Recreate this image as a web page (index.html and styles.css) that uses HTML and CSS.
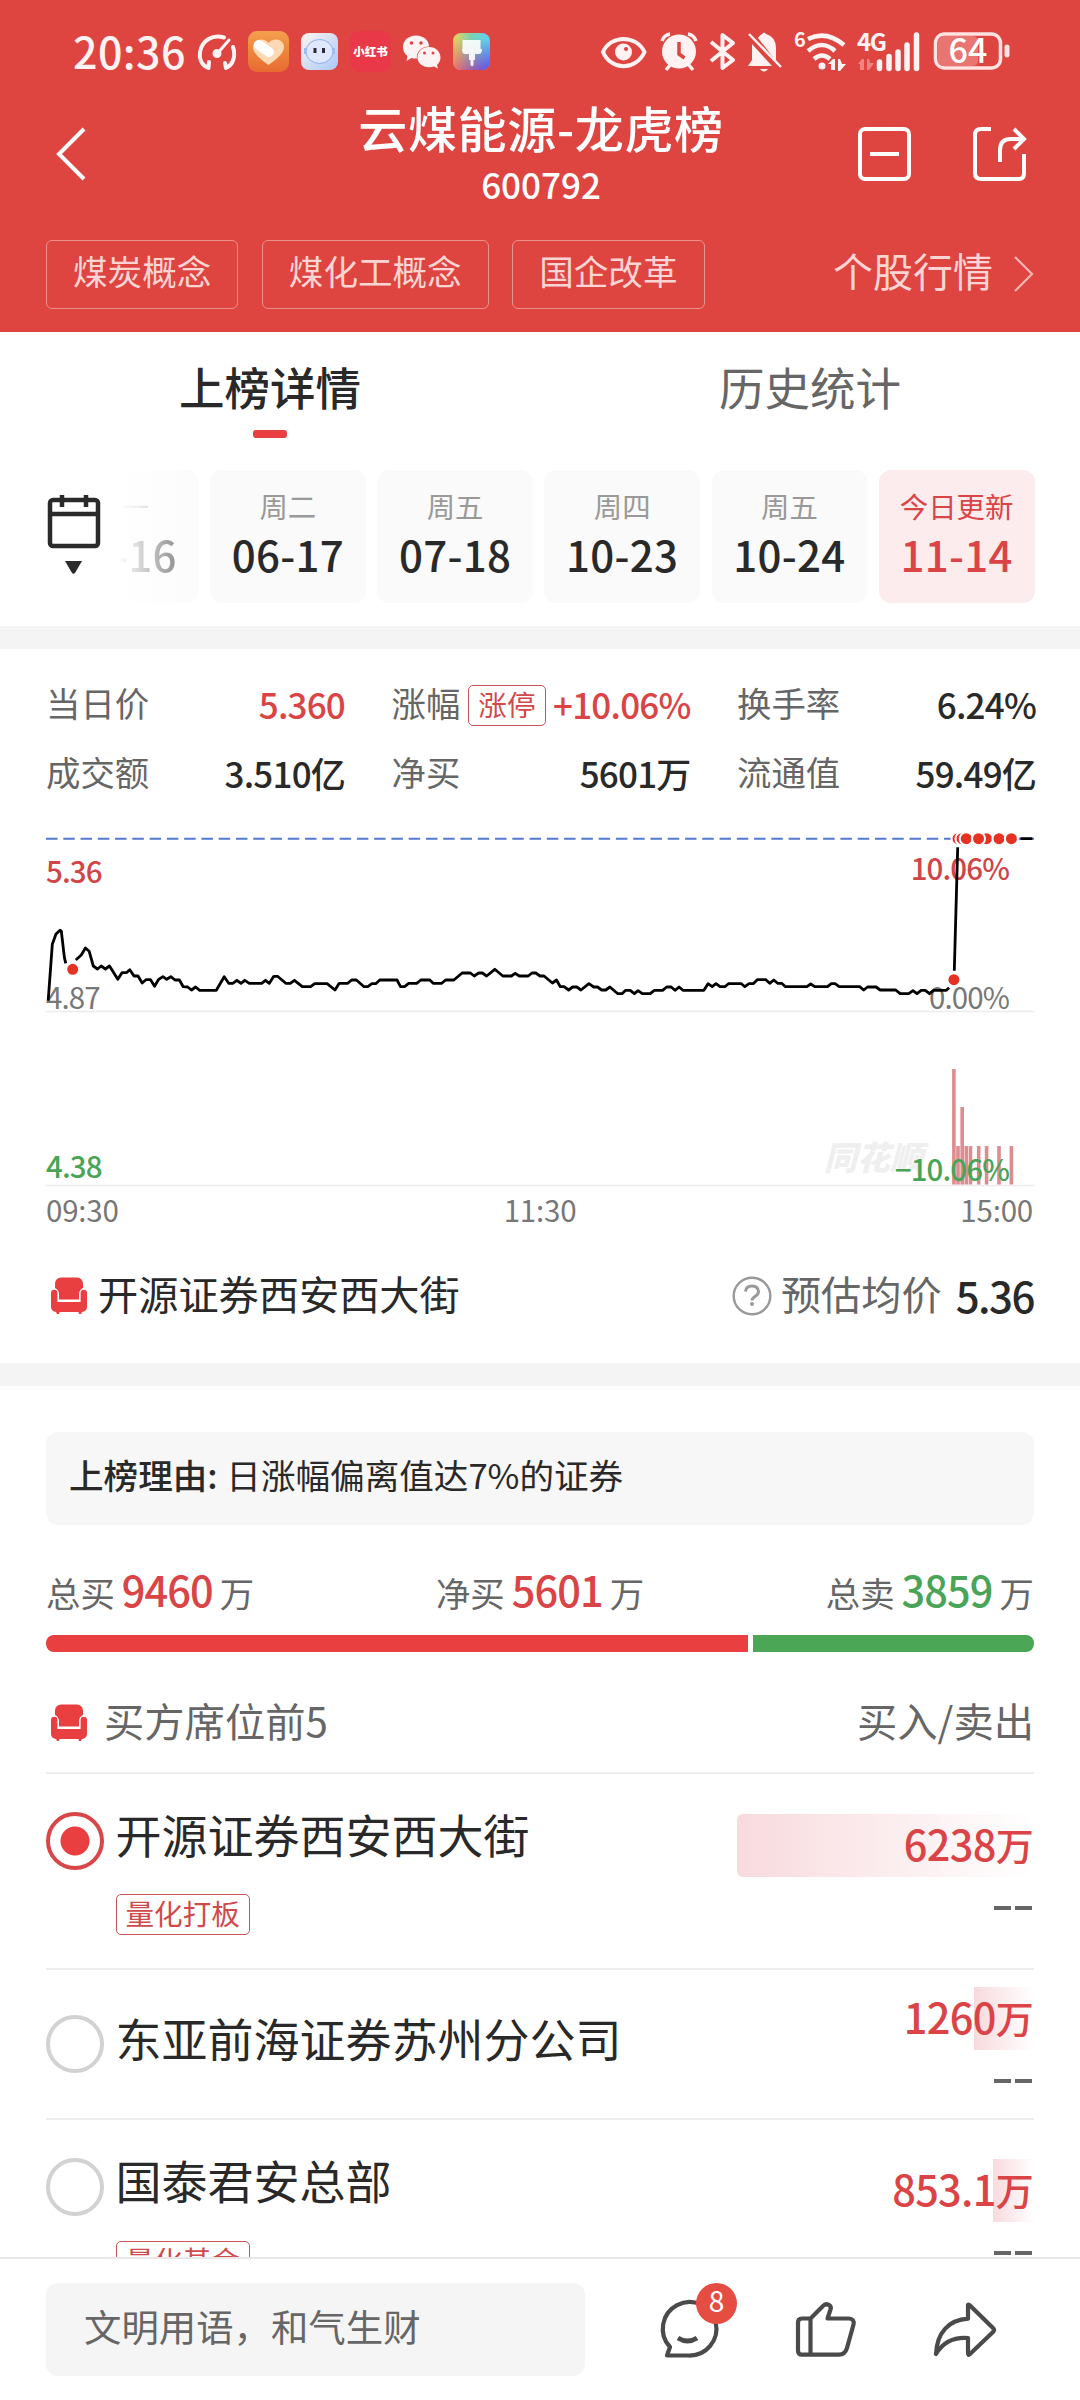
FILE: index.html
```html
<!DOCTYPE html>
<html lang="zh-CN">
  <head>
    <meta charset="UTF-8" />
    <meta name="viewport" content="width=device-width, initial-scale=1.0" />
    <title>云煤能源-龙虎榜</title>
    <link rel="stylesheet" href="styles.css">
  </head>
  <body>
    <svg width="0" height="0" class="defs">
      <symbol id="sofa" viewBox="0 0 36 38">
        <path fill="#e93f41" d="M10 0.500h16a6 6 0 0 1 6 6v4.500a7 7 0 0 0-4 6v5.500H8V17a7 7 0 0 0-4-6V6.500a6 6 0 0 1 6-6z" />
        <path fill="#e93f41" d="M0 16a3.200 3.200 0 0 1 6.400 0v9h23.200v-9a3.200 3.200 0 0 1 6.400 0v14a5 5 0 0 1-5 5l-1 2h-2l-.5-2h-19l-.5 2H6l-1-2a5 5 0 0 1-5-5z" />
      </symbol>
    </svg>

    <header class="header">
      <div class="status">
        <span class="clock">20:36</span>
        <div class="status-group">
          <svg width="40" height="42" viewBox="0 0 40 42" fill="none" stroke="#fff2f2" stroke-width="4" stroke-linecap="round">
            <path d="M11.500 38C4 35 2 28 3 22 5 10 16 4 27 7.500M36 17c3 9 0 18-7 21M12 32l-.5 6M28 33l1 5" />
            <path d="M20 24L32 10" stroke-width="3" /><circle cx="20" cy="23.500" r="2.500" fill="#fff2f2" />
          </svg>
          <svg width="41" height="42" viewBox="0 0 41 42">
            <defs><linearGradient id="orange" x2="0" y2="1"><stop stop-color="#f4a04c" /><stop offset="1" stop-color="#e86a30" /></linearGradient></defs>
            <rect y="1" width="41" height="41" rx="9" fill="url(#orange)" />
            <path fill="#fbd9b4" d="M20.500 35C12 29 5 23 5 17c0-8 11-10 15.500-4C25 7 36 9 36 17c0 6-7 12-15.500 18z" />
            <path d="M11 15l10 7" stroke="#fff" stroke-width="10" stroke-linecap="round" />
          </svg>
          <svg width="39" height="42" viewBox="0 0 39 42">
            <defs><linearGradient id="robot" x2="1" y2="1"><stop stop-color="#fff5ee" /><stop offset="1" stop-color="#a9c8f8" /></linearGradient></defs>
            <rect x="1" y="3" width="37" height="37" rx="8" fill="url(#robot)" />
            <ellipse cx="19.500" cy="21.500" rx="13.500" ry="12" fill="#dfe8fd" stroke="#8fb0ee" />
            <path d="M5 18v6M34 18v6" stroke="#9dbcf2" stroke-width="2" />
            <path d="M15 18v5M23.500 18v5" stroke="#2b2a3a" stroke-width="3" />
          </svg>
          <span class="app-red">小红书</span>
          <svg width="39" height="42" viewBox="0 0 39 42">
            <path fill="#fff2f2" d="M14 5.500c8 0 13 5 13 11-8 0-13 6-12 12-2 .3-4 0-5.500-.5L4.500 31l1-5C2 23.500 1 20 1 17 1 10.500 6.500 5.500 14 5.500z" />
            <path fill="#fff2f2" d="M27 17c7 0 11.500 5 11.500 10.500 0 3-1.500 5.500-3.500 7.500l1 3.500-4-2c-9 2.500-16.500-2-16.500-9C15.500 21.500 20 17 27 17z" />
            <g fill="#de4440"><circle cx="9.500" cy="13" r="1.800" /><circle cx="19" cy="13" r="1.800" /><circle cx="22.500" cy="23" r="1.500" /><circle cx="31" cy="23" r="1.500" /></g>
          </svg>
          <svg width="39" height="42" viewBox="0 0 39 42">
            <defs>
              <linearGradient id="paintTop" x2="1"><stop stop-color="#f3d255" /><stop offset=".5" stop-color="#79d0b5" /><stop offset="1" stop-color="#5fd0f6" /></linearGradient>
              <linearGradient id="paintLow" x2="1"><stop stop-color="#ef6a68" /><stop offset="1" stop-color="#5646ee" /></linearGradient>
              <linearGradient id="paintFade" x2="0" y2="1"><stop offset=".2" stop-color="#fff" stop-opacity="0" /><stop offset="1" stop-color="#fff" /></linearGradient>
              <mask id="paintMask"><rect width="39" height="42" fill="url(#paintFade)" /></mask>
            </defs>
            <rect x="1" y="3" width="37" height="37" rx="8" fill="url(#paintTop)" />
            <rect x="1" y="3" width="37" height="37" rx="8" fill="url(#paintLow)" mask="url(#paintMask)" />
            <path fill="#fff" opacity=".9" d="M10.500 10h18v9h1.500q0 5-3 5h-4v6h-1.500v5q-1.500 2.500-3 0v-5H17v-6h-4q-3 0-3-5h.5z" />
          </svg>
        </div>
        <div class="status-group status-right">
          <svg width="46" height="42" viewBox="0 0 46 42">
            <path d="M2 22C10 4.500 35 4.500 43.500 22 35 41 10 41 2 22z" fill="none" stroke="#fff2f2" stroke-width="4" />
            <circle cx="22.500" cy="22" r="8.500" fill="#fff2f2" /><circle cx="25" cy="19" r="2" fill="#de4440" />
          </svg>
          <svg width="39" height="42" viewBox="0 0 39 42">
            <path d="M7 40l5-6M34 40l-5-6M3 11q2-6 8-7M37 11q-2-6-8-7" stroke="#fff2f2" stroke-width="3.500" fill="none" />
            <circle cx="20" cy="21.500" r="17" fill="#fff2f2" /><path d="M20 12v12l5.500 4" fill="none" stroke="#de4440" stroke-width="3.500" />
          </svg>
          <svg width="25" height="42" viewBox="0 0 25 42">
            <path d="M1 12l22 18-10.500 8V5L23 13 1 31" fill="none" stroke="#fff2f2" stroke-width="4" stroke-linejoin="round" />
          </svg>
          <svg width="35" height="42" viewBox="0 0 35 42">
            <path fill="#fff2f2" d="M15 4q2-3 4 0 10 3 10 14v13L11 8q2-3 4-4zM5 14l20 22H1l4-6zM13 39h8q-4 5-8 0z" />
            <path d="M2 4l32 33" stroke="#fff2f2" stroke-width="2.500" />
          </svg>
          <svg width="52" height="42" viewBox="0 0 52 42">
            <text x="0" y="17" class="status-tiny">6</text>
            <path d="M14 9q18-9 36 6M14 21q14-12 27 0M20 29q8-7 16 0" fill="none" stroke="#fff2f2" stroke-width="4.500" />
            <circle cx="28" cy="36" r="3.500" fill="#fff2f2" />
            <path fill="#fff2f2" d="M34 34l5-5h2v11h-4v-6zM44 29h2l2 5h4l-6 7h-2z" />
          </svg>
          <svg width="64" height="42" viewBox="0 0 64 42">
            <text x="-1" y="21" class="status-tiny status-net">4G</text>
            <path fill="#ef8583" d="M0 34l4-5h2v11H2v-6zM9 29h2l1 4h4l-5 7H9z" />
            <path d="M21.500 32v6.500M31 26.500v12M40 22v16.500M49 15v23.500M58.500 5v33.500" stroke="#fff2f2" stroke-width="5.500" stroke-linecap="round" />
          </svg>
          <svg width="77" height="42" viewBox="0 0 77 42">
            <rect x="1.500" y="4" width="65" height="34" rx="9" fill="none" stroke="#ffe3e2" stroke-width="3.500" />
            <rect x="4" y="6" width="40" height="30" rx="5" fill="#e97572" />
            <path d="M73 17v8" stroke="#ffe3e2" stroke-width="5" stroke-linecap="round" />
            <text x="14.500" y="33" class="status-level">64</text>
          </svg>
        </div>
      </div>

      <div class="navbar">
        <svg class="back" width="30" height="56" viewBox="0 0 30 56" fill="none" stroke="#fff" stroke-width="4"><path d="M28 3L3 28l25 25" /></svg>
        <div class="title">
          <h1>云煤能源-龙虎榜</h1>
          <p>600792</p>
        </div>
        <div class="nav-actions">
          <svg width="54" height="54" viewBox="0 0 54 54" fill="none" stroke="#fff" stroke-width="4"><rect x="2" y="2" width="49" height="50" rx="5" /><path d="M12 27h29" /></svg>
          <svg width="54" height="54" viewBox="0 0 54 54" fill="none" stroke="#fff" stroke-width="4"><path d="M18 2H8q-6 0-6 6v38q0 6 6 6h38q5 0 5-6V27" /><path d="M27 35V23q0-11 11-11h13M41 2l10 10-10 10" /></svg>
        </div>
      </div>

      <div class="concepts">
        <span class="concept">煤炭概念</span>
        <span class="concept">煤化工概念</span>
        <span class="concept">国企改革</span>
        <span class="quote-link"><span>个股行情</span>
          <svg width="20" height="36" viewBox="0 0 20 36" fill="none" stroke="#f6b7b5" stroke-width="2.200"><path d="M1 1l17 17L1 35" /></svg>
        </span>
      </div>
    </header>

    <section class="tabs">
      <div class="tab active">上榜详情</div>
      <div class="tab">历史统计</div>
    </section>

    <section class="dates">
      <div class="calendar">
        <svg width="54" height="80" viewBox="0 0 54 80" fill="none" stroke="#2a2a2a" stroke-width="4.500">
          <rect x="3" y="5" width="48" height="46" rx="3" /><path d="M3 19h48M15 0v12M39 0v12" />
          <path d="M18 66h17l-7 12q-1.500 1.500-3 0z" fill="#2a2a2a" stroke="none" />
        </svg>
      </div>
      <div class="date faded"><small>周一</small><b>06-16</b></div>
      <div class="date"><small>周二</small><b>06-17</b></div>
      <div class="date"><small>周五</small><b>07-18</b></div>
      <div class="date"><small>周四</small><b>10-23</b></div>
      <div class="date"><small>周五</small><b>10-24</b></div>
      <div class="date today"><small>今日更新</small><b>11-14</b></div>
    </section>

    <section class="panel quote">
      <div class="stats">
        <div class="stat"><span>当日价</span><b class="red">5.360</b></div>
        <div class="stat"><span>涨幅</span><em class="tag">涨停</em><b class="red">+10.06%</b></div>
        <div class="stat"><span>换手率</span><b>6.24%</b></div>
        <div class="stat"><span>成交额</span><b>3.510亿</b></div>
        <div class="stat"><span>净买</span><b>5601万</b></div>
        <div class="stat"><span>流通值</span><b>59.49亿</b></div>
      </div>

      <svg class="chart" width="990" height="400" viewBox="0 0 990 400">
        <path d="M0 181.500H988M0 355.500H988" stroke="#ececec" stroke-width="1.500" />
        <path d="M0 8.700H988" stroke="#5679d0" stroke-width="2" stroke-dasharray="11.500 5.770" />
        <text x="778" y="340" class="watermark">同花顺</text>
        <g class="axis">
          <text x="0" y="53" class="up">5.36</text>
          <text x="0" y="179">4.87</text>
          <text x="0" y="348" class="down">4.38</text>
          <text x="963" y="50" class="up end">10.06%</text>
          <text x="963" y="179" class="end">0.00%</text>
        </g>
        <path stroke="#dd8d90" stroke-width="3.600" d="M907.900 239V354.500M912 316V354.500M916.200 277V354.500M920.300 316V354.500M924.500 316V354.500M932.700 316V354.500M940.600 316V354.500M953 316V354.500M965.400 316V354.500" />
        <g class="axis">
          <text x="963" y="351" class="down end">−10.06%</text>
          <text x="0" y="391.500" class="time">09:30</text>
          <text x="494" y="391.500" class="time middle">11:30</text>
          <text x="987" y="391.500" class="time end">15:00</text>
        </g>
        <g fill="none" stroke="#000" stroke-width="2.800" stroke-linejoin="round">
          <path d="M2.200 170.700L6.300 114.300 10 104 14 100.300 15.300 101 18.400 127.700 19.800 133.300" />
          <path d="M29.800 130L35.300 125 39.400 118 43.200 121.300 47.300 136 51.500 139 55.200 136 59.400 139 63.500 136 71.800 149.300 76 142.700 80.400 142.700 83.800 139.700 88 146 92 146 96.200 153 100 149.700 104.500 149.700 108.600 156.300 112.400 149.700 116.900 146.700 120.700 149.300 124.800 146.700 129 150 133.400 150 137.200 156.700 141.700 157 145.500 160 149.600 157 153.700 160.300 170.300 160.300 178.200 146.700 182.700 153.300 186.800 153.300 190.900 150.300 195 153.300 198.800 150.300 203.300 153.300 215.700 153.300 219.500 150.300 223.300 153.300 227.800 146.300 231.500 146.300 239.800 153.300 244.300 153.300 248.400 150.300 256.300 156.700 264.600 156.700 268.700 153.700 281.100 153.700 289 160 293.200 153.300 301.800 153.300 305.600 150 310.400 150 318 156.700 321.800 156.700 325.900 153.700 329.700 153.700 333.800 150 351 150 354.500 156.700 358.600 156.700 362.700 153.300 370.700 153.300 374.800 150 383.800 150 387.200 153.300 395.800 153.300 399.600 150 407.900 150 416.100 143 424.400 143 428.200 146 432.700 143 436.400 143 440.600 146 448.800 139.300 456.800 146 465.400 146 469.200 143.300 473.300 146 482.200 146 486 143 489.800 143 494 146 498 146 506.400 153 510.500 150 514.300 156.700 518 156.700 522.600 160 526.700 157 530.800 157 535 160 542.900 153.700 547.700 157 551.500 157 555.600 160 559.800 160 563.900 157 571.800 163.700 576 163.700 579.700 160.300 584.200 160.300 588.400 163.700 592.100 160.700 596.300 163.700 604.200 163.700 608.300 160.300 616.600 160.300 620.700 157 625.200 157 629 160.300 633.100 157 636.900 160.300 657.900 160.300 662 153.700 666.200 156.700 670 153.700 674.100 156.700 678.900 156.700 682.400 153.700 695.400 153.700 698.900 156.700 703 153.700 707.200 153.700 711.300 149.700 719.900 149.700 723.700 153.300 727.800 150 731.600 153.300 735.700 153.300 739.500 156.700 760.900 156.700 764.700 154 768.800 156.700 781.500 156.700 785.300 153.700 789.100 153.700 793.200 156.700 813.600 156.700 817.700 160 821.500 157 830.100 157 834.200 160 849.700 160 854.200 163.700 862.800 163.700 866.900 160.700 871 163.700 875.200 160.300 879.300 160.300 883.500 163.700 887.600 160.300 900.300 160.300 903.100 157.700" />
          <path d="M908.300 140.700L911.700 17.300M974.400 8.700H986.400" />
        </g>
        <g fill="#e63223" stroke="#fff" stroke-width="2">
          <circle cx="26.700" cy="139.300" r="6.500" /><circle cx="907.900" cy="149.700" r="6.500" />
          <circle cx="912" cy="8.700" r="6.500" /><circle cx="916" cy="8.700" r="6.500" /><circle cx="920.300" cy="8.700" r="6.500" />
          <circle cx="940.500" cy="8.700" r="6.500" /><circle cx="932.500" cy="8.700" r="6.500" />
          <circle cx="953" cy="8.700" r="6.500" /><circle cx="965.400" cy="8.700" r="6.500" />
        </g>
      </svg>

      <div class="seat-row">
        <svg class="sofa" width="36" height="38"><use href="#sofa" /></svg>
        <span class="seat-name">开源证券西安西大街</span>
        <svg width="40" height="40" viewBox="0 0 40 40" fill="none" stroke="#999" stroke-width="2.400"><circle cx="20" cy="20" r="18.300" /><path d="M13.500 15.500q.5-5.500 6.500-5.500t6.500 5.500q0 3-3.500 5-3 2-3 4" stroke-width="3" /><circle cx="20" cy="28" r="2" fill="#999" stroke="none" /></svg>
        <span class="avg-label">预估均价</span>
        <b>5.36</b>
      </div>
    </section>

    <main class="panel board">
      <p class="reason"><b>上榜理由:</b> 日涨幅偏离值达7%的证券</p>
      <div class="totals">
        <div>总买<b class="red">9460</b>万</div>
        <div>净买<b class="red">5601</b>万</div>
        <div>总卖<b class="green">3859</b>万</div>
      </div>
      <div class="ratio"><i style="flex-grow: 9460"></i><i class="sell" style="flex-grow: 3790"></i></div>
      <div class="board-head">
        <svg class="sofa" width="36" height="38"><use href="#sofa" /></svg>
        <span>买方席位前5</span>
        <span class="right">买入/卖出</span>
      </div>

      <div class="seat first">
        <i class="radio checked"></i>
        <div class="seat-info"><h2>开源证券西安西大街</h2><em class="tag">量化打板</em></div>
        <div class="seat-amount"><div class="amount" style="--bar: 297px">6238<span>万</span></div><div class="none"><i></i><i></i></div></div>
      </div>
      <div class="seat second">
        <i class="radio"></i>
        <div class="seat-info"><h2>东亚前海证券苏州分公司</h2></div>
        <div class="seat-amount"><div class="amount" style="--bar: 60px">1260<span>万</span></div><div class="none"><i></i><i></i></div></div>
      </div>
      <div class="seat third">
        <i class="radio"></i>
        <div class="seat-info"><h2>国泰君安总部</h2><em class="tag">量化基金</em></div>
        <div class="seat-amount"><div class="amount" style="--bar: 41px">853.1<span>万</span></div><div class="none"><i></i><i></i></div></div>
      </div>
    </main>

    <footer class="footer">
      <div class="comment">文明用语，和气生财</div>
      <div class="actions">
        <div class="action">
          <svg width="60" height="60" viewBox="0 0 60 60"><path d="M8 55.500L11 47A26.800 26.800 0 1 1 29.500 55.500z" /><path d="M19 38q9.500 6 19 0" stroke-width="5" /></svg>
          <span class="badge">8</span>
        </div>
        <svg width="60" height="56" viewBox="0 0 60 56"><path d="M6 16.500h8.500L27 4c3-3.500 9-1 7.500 3.500L31.500 16.500H53c3.500 0 5.500 2.500 4.500 6L51 46c-1.500 5-4.500 6.700-8 6.700H6q-4 0-4-4v-28q0-4.200 4-4.200zM14.500 16.500v36" /></svg>
        <svg width="64" height="56" viewBox="0 0 64 56"><path d="M3 52C4 30 16 18 35 16.700V3.500q0-2 2 0L60 26q2 2 0 4L37 52q-2 2-2-1V36C20 35 10 40 3 52z" /></svg>
      </div>
    </footer>
  </body>
</html>
```
FILE: styles.css
```css
* {
  box-sizing: border-box;
  margin: 0;
  padding: 0;
}
body {
  width: 1080px;
  height: 2400px;
  display: flex;
  flex-direction: column;
  overflow: hidden;
  background: #fff;
  color: #292929;
  font-family: "Noto Sans CJK SC", "Noto Sans", sans-serif;
  font-size: 34.4px;
  line-height: 1;
  white-space: nowrap;
}
svg {
  display: block;
  flex: none;
  overflow: visible;
}
.defs {
  position: absolute;
}
b {
  font-weight: 500;
}
i,
em {
  font-style: normal;
}
.red {
  color: #da4446;
}
.green {
  color: #4aa458;
}

/* header */
.header {
  flex: none;
  height: 332px;
  background: #de4440;
  color: #fff;
}
.status {
  display: flex;
  align-items: center;
  height: 102px;
  padding: 0 69px 0 73px;
}
.clock {
  width: 124px;
  margin-top: -2px;
  font-size: 43px;
  font-weight: 500;
  letter-spacing: 0.4px;
  color: #fff2f2;
}
.status-group {
  display: flex;
  gap: 11px;
}
.status-right {
  gap: 12px;
  margin-left: auto;
}
.app-red {
  width: 41px;
  height: 41px;
  margin-top: 1px;
  border-radius: 9px;
  background: #e93948;
  font-size: 11.5px;
  font-weight: 900;
  line-height: 40px;
  text-align: center;
}
.status-tiny {
  font-size: 20px;
  font-weight: 700;
  fill: #fff2f2;
}
.status-net {
  font-size: 24px;
  letter-spacing: -1.5px;
}
.status-level {
  font-size: 34px;
  font-weight: 500;
  fill: #fff;
}
.navbar {
  display: flex;
  justify-content: space-between;
  height: 138px;
  padding: 0 53px 0 56px;
}
.back {
  margin-top: 24px;
}
.title {
  text-align: center;
  margin-left: 138px;
}
.title h1 {
  font-size: 49px;
  font-weight: 500;
  line-height: 50px;
  letter-spacing: 0.6px;
}
.title p {
  font-size: 35px;
  font-weight: 500;
  line-height: 36px;
  margin-top: 14px;
}
.nav-actions {
  display: flex;
  gap: 61px;
  padding-top: 25px;
}
.concepts {
  display: flex;
  gap: 23.5px;
  padding: 0 46px;
}
.concept {
  height: 69px;
  padding: 0 26px;
  border: 1px solid #ed908d;
  border-radius: 6px;
  color: #fbd4d3;
  font-size: 34.6px;
  line-height: 59px;
}
.quote-link {
  display: flex;
  gap: 21px;
  align-items: center;
  height: 67px;
  margin-left: auto;
  font-size: 40px;
  color: #fbd4d3;
}
.quote-link span {
  margin-top: -7px;
}

/* tabs and dates */
.tabs {
  flex: none;
  display: flex;
  height: 138px;
}
.tab {
  flex: 1;
  display: flex;
  flex-direction: column;
  align-items: center;
  font-size: 45.5px;
  line-height: 60px;
  padding-top: 24px;
  color: #666;
}
.tab.active {
  color: #292929;
  font-weight: 500;
}
.tab.active::after {
  content: "";
  width: 34px;
  height: 8px;
  margin-top: 14px;
  border-radius: 3px;
  background: #e93f41;
}
.dates {
  flex: none;
  display: flex;
  justify-content: flex-end;
  gap: 11.4px;
  height: 156px;
  padding-right: 45.5px;
}
.calendar {
  flex: none;
  width: 80px;
  height: 132px;
  margin-right: -85px;
  padding: 25px 0 0 11px;
  background: #fff;
  z-index: 1;
}
.date {
  flex: none;
  display: flex;
  flex-direction: column;
  align-items: center;
  width: 155.800px;
  height: 133px;
  padding-top: 21px;
  border-radius: 12px;
  background: #fafafa;
}
.date small {
  font-size: 28.4px;
  line-height: 30px;
  color: #999;
}
.date b {
  font-size: 42px;
  line-height: 44px;
  margin-top: 11px;
  letter-spacing: 0.3px;
}
.date.faded {
  -webkit-mask-image: linear-gradient(90deg, transparent 48%, rgba(0, 0, 0, 0.7) 100%);
  mask-image: linear-gradient(90deg, transparent 48%, rgba(0, 0, 0, 0.7) 100%);
}
.date.today {
  background: #fceced;
}
.date.today small,
.date.today b {
  color: #da4446;
}

/* quote */
.panel {
  border-top: 23px solid #f4f4f4;
  padding: 0 46px;
}
.quote {
  flex: none;
  height: 737px;
}
.stats {
  display: grid;
  grid-template-columns: repeat(3, 299px);
  column-gap: 46.5px;
  padding-top: 20px;
  height: 181px;
  grid-auto-rows: 69px;
}
.stat {
  display: flex;
  align-items: center;
  color: #666;
}
.stat > span {
  margin-top: -2px;
}
.stat b {
  margin-left: auto;
  font-size: 35px;
  letter-spacing: -0.8px;
  color: #292929;
}
.stat b.red {
  color: #da4446;
}
.stat .tag {
  margin-left: 8px;
  margin-top: 3px;
}
.tag {
  display: inline-block;
  height: 41px;
  padding: 0 9px;
  border: 1.5px solid #c95557;
  border-radius: 5px;
  color: #d04a4c;
  font-size: 28.6px;
  line-height: 35px;
}
.axis text {
  font-size: 29.5px;
  letter-spacing: -0.9px;
  fill: #777;
}
.axis .up {
  fill: #d04548;
  font-weight: 500;
}
.axis .down {
  fill: #4aa458;
  font-weight: 500;
}
.axis .time {
  letter-spacing: -0.2px;
}
.axis .end {
  text-anchor: end;
}
.axis .middle {
  text-anchor: middle;
}
.watermark {
  font-size: 33px;
  font-weight: 900;
  font-style: italic;
  fill: #efefef;
}
.seat-row {
  display: flex;
  align-items: center;
  height: 60px;
  margin-top: 36px;
  font-size: 40.2px;
}
.sofa {
  margin-left: 5px;
}
.seat-name {
  margin: -6px auto 0 11px;
}
.avg-label {
  margin: -6px 14px 0 9px;
  color: #666;
}
.seat-row b {
  font-size: 42px;
  letter-spacing: -1.5px;
  margin-top: -3px;
}

/* board */
.board {
  flex: 1;
  min-height: 0;
  overflow: hidden;
}
.reason {
  height: 93px;
  margin-top: 46px;
  padding-left: 23px;
  border-radius: 12px;
  background: #f7f7f7;
  font-size: 34.6px;
  line-height: 85px;
  word-spacing: 1px;
}
.totals {
  display: flex;
  justify-content: space-between;
  height: 60px;
  margin-top: 34px;
  line-height: 60px;
  color: #666;
}
.totals b {
  font-size: 41.5px;
  letter-spacing: -0.9px;
  margin: 0 7px;
}
.ratio {
  display: flex;
  gap: 5px;
  height: 17px;
  margin-top: 16px;
}
.ratio i {
  flex-basis: 0;
  border-radius: 8px 0 0 8px;
  background: #e93f41;
}
.ratio .sell {
  border-radius: 0 8px 8px 0;
  background: #4ba755;
}
.board-head {
  display: flex;
  align-items: center;
  height: 122px;
  padding-top: 22px;
  border-bottom: 2px solid #eee;
  font-size: 40.3px;
  color: #666;
}
.board-head span {
  margin: -6px 0 0 17px;
}
.board-head .right {
  margin-left: auto;
}
.seat {
  display: flex;
  border-bottom: 2px solid #eee;
}
.first {
  height: 196px;
  padding-top: 38px;
}
.second {
  height: 150px;
  padding-top: 17px;
}
.third {
  height: 196px;
  padding-top: 38px;
}
.radio {
  flex: none;
  width: 58px;
  height: 58px;
  border: 4px solid #d2d2d2;
  border-radius: 50%;
}
.second .radio {
  margin-top: 28px;
}
.radio.checked {
  border-color: #d84649;
  background: radial-gradient(circle, #e93f41 14px, #fff 15px);
}
.seat-info {
  margin-left: 11.5px;
}
.seat-info h2 {
  font-size: 46px;
  font-weight: 400;
  line-height: 50px;
  margin-top: -4px;
}
.second h2 {
  margin-top: 25px;
}
.seat-info .tag {
  margin-top: 36px;
}
.third .tag {
  margin-top: 37px;
}
.seat-amount {
  margin-left: auto;
}
.first .seat-amount {
  padding-top: 2px;
}
.third .seat-amount {
  padding-top: 1px;
}
.amount {
  display: flex;
  justify-content: flex-end;
  align-items: center;
  width: 297px;
  height: 63px;
  padding: 0 1px 4px 0;
  border-radius: 6px 0 0 6px;
  background: linear-gradient(90deg, #f8dadd, #fff) right / var(--bar) 100% no-repeat;
  color: #da4446;
  font-size: 41.5px;
  font-weight: 500;
  letter-spacing: -0.7px;
}
.amount span {
  font-size: 38px;
}
.none {
  display: flex;
  justify-content: flex-end;
  gap: 4px;
  padding: 29px 2px 0 0;
}
.none i {
  width: 17px;
  height: 3.5px;
  background: #666;
}

/* footer */
.footer {
  flex: none;
  display: flex;
  height: 143px;
  padding: 24px 46px;
  border-top: 2px solid #e8e8e8;
}
.comment {
  width: 539px;
  height: 93px;
  padding-left: 38px;
  border-radius: 12px;
  background: #f5f5f5;
  font-size: 37.4px;
  line-height: 86px;
  color: #666;
}
.actions {
  display: flex;
  align-items: center;
  gap: 77px;
  padding-left: 74px;
}
.actions svg {
  fill: none;
  stroke: #4a4a4a;
  stroke-width: 4.2;
  stroke-linejoin: round;
}
.action {
  position: relative;
}
.badge {
  position: absolute;
  left: 37px;
  top: -17px;
  width: 41px;
  height: 41px;
  border-radius: 50%;
  background: #e54d42;
  color: #fff;
  font-size: 28px;
  line-height: 35px;
  text-align: center;
}
```
